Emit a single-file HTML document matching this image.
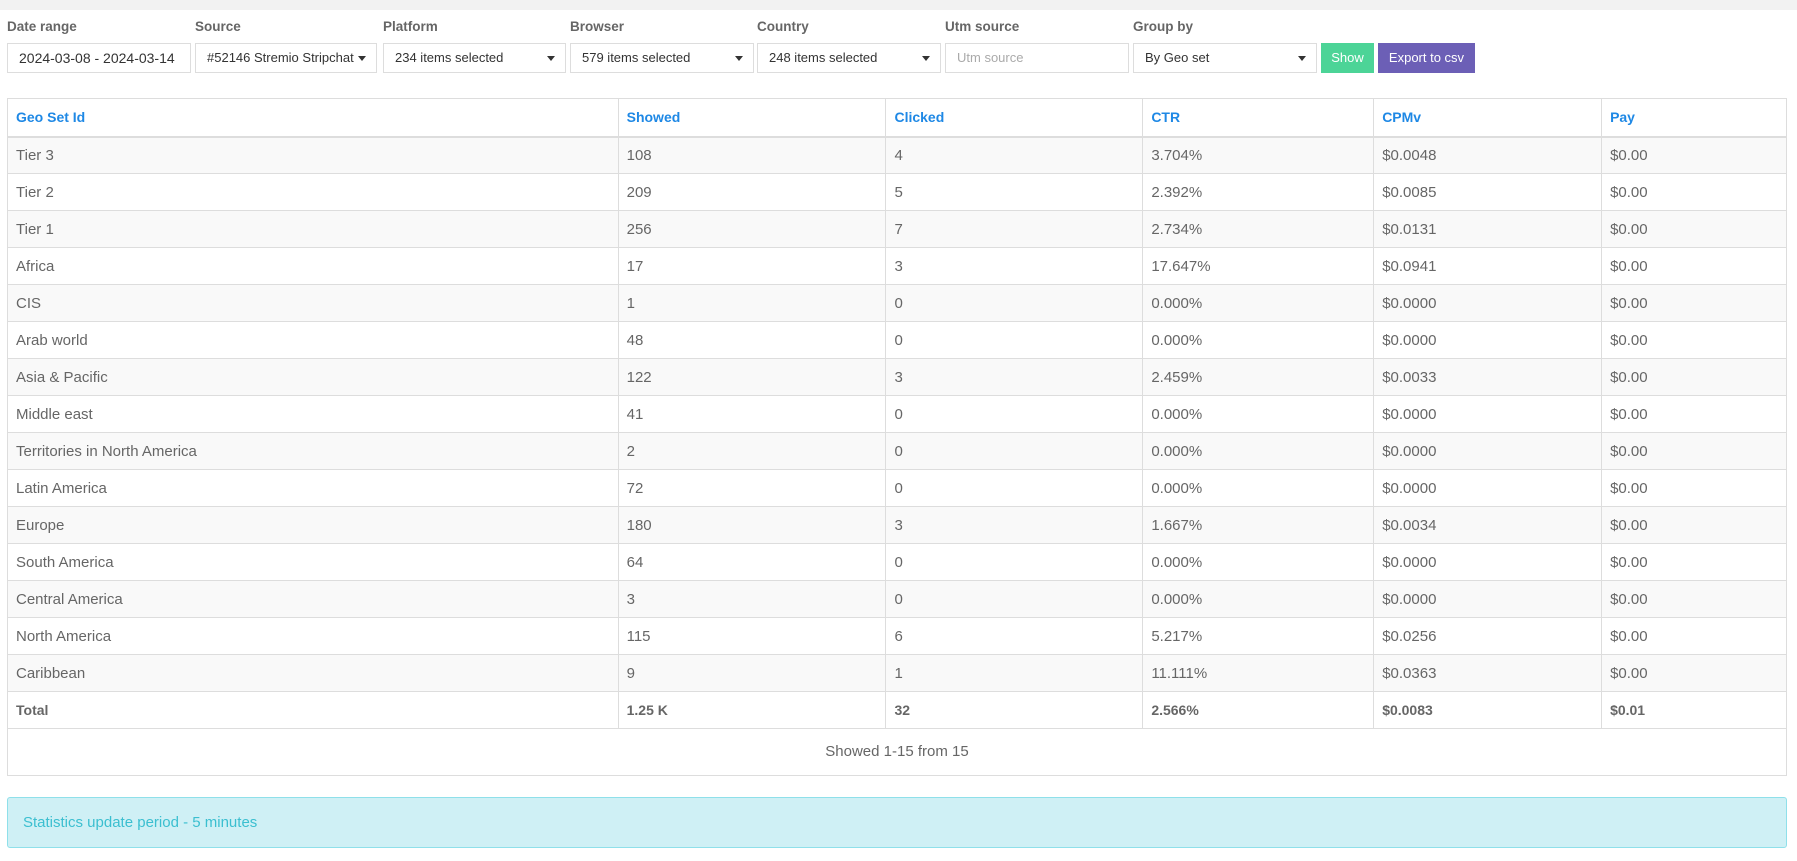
<!DOCTYPE html>
<html><head><meta charset="utf-8"><style>
*{box-sizing:border-box;margin:0;padding:0}
body{width:1797px;height:861px;background:#fff;font-family:"Liberation Sans",sans-serif;color:#666;position:relative;overflow:hidden}
.bar{position:absolute;left:0;top:0;width:1797px;height:10px;background:#f2f2f2}
.lbl{position:absolute;top:19px;font-size:13.5px;font-weight:bold;color:#666}
.in{position:absolute;top:43px;height:30px;border:1px solid #ddd;background:#fff;font-size:13px;color:#333;line-height:28px;padding-left:11px;white-space:nowrap;overflow:hidden}
.in .c{position:absolute;right:10px;top:12px;width:0;height:0;border-left:4px solid transparent;border-right:4px solid transparent;border-top:5px solid #333}
.btn{position:absolute;top:43px;height:30px;color:#fff;font-size:13px;line-height:30px;text-align:center}
table{position:absolute;left:7px;top:98px;width:1780px;border-collapse:collapse;font-size:15px}
td,th{border:1px solid #ddd;text-align:left;padding:0 8px;height:37px}
th{height:38px;color:#1e88e5;font-weight:bold;border-bottom:2px solid #ddd;font-size:14px}
tbody tr:nth-child(odd){background:#f9f9f9}
tr.tot td{font-weight:bold;color:#666;font-size:14px}
.foot{position:absolute;left:7px;top:728px;width:1780px;height:48px;border:1px solid #ddd;border-top:none;text-align:center;line-height:48px;font-size:15px}
.alert{position:absolute;left:7px;top:797px;width:1780px;height:51px;background:#cff0f5;border:1px solid #8fe0ea;border-radius:3px;color:#3bbfd0;font-size:15px;line-height:49px;padding-left:15px}
</style></head><body>
<div class="bar"></div>
<div class="lbl" style="left:7px">Date range</div>
<div class="lbl" style="left:195px">Source</div>
<div class="lbl" style="left:383px">Platform</div>
<div class="lbl" style="left:570px">Browser</div>
<div class="lbl" style="left:757px">Country</div>
<div class="lbl" style="left:945px">Utm source</div>
<div class="lbl" style="left:1133px">Group by</div>
<div class="in" style="left:7px;width:184px;font-size:14px">2024-03-08 - 2024-03-14</div>
<div class="in" style="left:195px;width:182px">#52146 Stremio Stripchat<span class="c"></span></div>
<div class="in" style="left:383px;width:183px">234 items selected<span class="c"></span></div>
<div class="in" style="left:570px;width:184px">579 items selected<span class="c"></span></div>
<div class="in" style="left:757px;width:184px">248 items selected<span class="c"></span></div>
<div class="in" style="left:945px;width:184px;color:#aaa">Utm source</div>
<div class="in" style="left:1133px;width:184px">By Geo set<span class="c"></span></div>
<div class="btn" style="left:1321px;width:53px;background:#4cd497">Show</div>
<div class="btn" style="left:1378px;width:97px;background:#6c5fb6">Export to csv</div>
<table>
<colgroup><col style="width:611px"><col style="width:268px"><col style="width:257px"><col style="width:231px"><col style="width:228px"><col style="width:185px"></colgroup>
<thead><tr><th>Geo Set Id</th><th>Showed</th><th>Clicked</th><th>CTR</th><th>CPMv</th><th>Pay</th></tr></thead>
<tbody>
<tr><td>Tier 3</td><td>108</td><td>4</td><td>3.704%</td><td>$0.0048</td><td>$0.00</td></tr>
<tr><td>Tier 2</td><td>209</td><td>5</td><td>2.392%</td><td>$0.0085</td><td>$0.00</td></tr>
<tr><td>Tier 1</td><td>256</td><td>7</td><td>2.734%</td><td>$0.0131</td><td>$0.00</td></tr>
<tr><td>Africa</td><td>17</td><td>3</td><td>17.647%</td><td>$0.0941</td><td>$0.00</td></tr>
<tr><td>CIS</td><td>1</td><td>0</td><td>0.000%</td><td>$0.0000</td><td>$0.00</td></tr>
<tr><td>Arab world</td><td>48</td><td>0</td><td>0.000%</td><td>$0.0000</td><td>$0.00</td></tr>
<tr><td>Asia &amp; Pacific</td><td>122</td><td>3</td><td>2.459%</td><td>$0.0033</td><td>$0.00</td></tr>
<tr><td>Middle east</td><td>41</td><td>0</td><td>0.000%</td><td>$0.0000</td><td>$0.00</td></tr>
<tr><td>Territories in North America</td><td>2</td><td>0</td><td>0.000%</td><td>$0.0000</td><td>$0.00</td></tr>
<tr><td>Latin America</td><td>72</td><td>0</td><td>0.000%</td><td>$0.0000</td><td>$0.00</td></tr>
<tr><td>Europe</td><td>180</td><td>3</td><td>1.667%</td><td>$0.0034</td><td>$0.00</td></tr>
<tr><td>South America</td><td>64</td><td>0</td><td>0.000%</td><td>$0.0000</td><td>$0.00</td></tr>
<tr><td>Central America</td><td>3</td><td>0</td><td>0.000%</td><td>$0.0000</td><td>$0.00</td></tr>
<tr><td>North America</td><td>115</td><td>6</td><td>5.217%</td><td>$0.0256</td><td>$0.00</td></tr>
<tr><td>Caribbean</td><td>9</td><td>1</td><td>11.111%</td><td>$0.0363</td><td>$0.00</td></tr>
<tr class="tot" style="background:#fff"><td>Total</td><td>1.25 K</td><td>32</td><td>2.566%</td><td>$0.0083</td><td>$0.01</td></tr>
</tbody></table>
<div class="foot">Showed 1-15 from 15</div>
<div class="alert">Statistics update period - 5 minutes</div>
</body></html>
